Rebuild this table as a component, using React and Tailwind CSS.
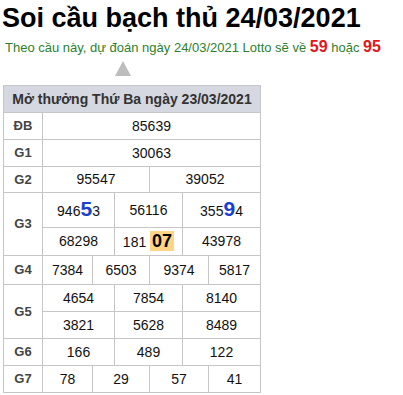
import React from "react";

const font = { fontFamily: '"Liberation Sans", Arial, sans-serif' };

function Cell({ className = "", children }) {
  return (
    <div className={`bg-white flex items-center justify-center text-[14px] text-[#111] ${className}`}>
      {children}
    </div>
  );
}

function Label({ className = "", children }) {
  return (
    <div className={`bg-white flex items-center justify-center text-[13px] font-bold text-[#444] ${className}`}>
      {children}
    </div>
  );
}

const Big = ({ children }) => (
  <span className="text-[21px] font-bold text-[#1a3fd0] leading-none">{children}</span>
);

export default function App() {
  return (
    <div className="w-[403px] h-[395px] bg-white overflow-hidden" style={font}>
      <h1 className="pt-[3px] pl-[2px] text-[27px] leading-[31px] font-bold text-black">
        Soi cầu bạch thủ 24/03/2021
      </h1>
      <div className="mt-[5px] pl-[5px] text-[13px] leading-[18px] text-[#2d7f2d]">
        Theo cầu này, dự đoán ngày 24/03/2021 Lotto sẽ về{" "}
        <span className="text-[16px] leading-none font-bold text-[#e3161c]">59</span> hoặc{" "}
        <span className="text-[16px] leading-none font-bold text-[#e3161c]">95</span>
      </div>
      <div className="mt-[4px] ml-[115px] w-0 h-0 border-l-[8px] border-r-[8px] border-b-[15px] border-l-transparent border-r-transparent border-b-[#bdbdbd]" />
      <div className="mt-[9px] ml-[3px] w-[258px] grid grid-cols-[38px_49px_21px_34px_32px_25px_51px] gap-px p-px bg-[#c6c6c6]">
        <div className="col-span-7 h-[26px] bg-[#d5d8e0] flex items-center justify-center text-[14px] font-bold text-[#333]">
          Mở thưởng Thứ Ba ngày 23/03/2021
        </div>

        <Label className="h-[26px]">ĐB</Label>
        <Cell className="col-span-6">85639</Cell>

        <Label className="h-[26px]">G1</Label>
        <Cell className="col-span-6">30063</Cell>

        <Label className="h-[25px]">G2</Label>
        <Cell className="col-span-3">95547</Cell>
        <Cell className="col-span-3">39052</Cell>

        <Label className="row-span-2">G3</Label>
        <Cell className="col-span-2 h-[34px]">
          <span>946<Big>5</Big>3</span>
        </Cell>
        <Cell className="col-span-2">56116</Cell>
        <Cell className="col-span-2">
          <span>355<Big>9</Big>4</span>
        </Cell>
        <Cell className="col-span-2 h-[27px]">68298</Cell>
        <Cell className="col-span-2">
          <span>
            181{" "}
            <span className="inline-block px-[2px] bg-[#fdd584] text-[18px] leading-[20px] font-bold text-black">07</span>
          </span>
        </Cell>
        <Cell className="col-span-2">43978</Cell>

        <Label className="h-[28px]">G4</Label>
        <Cell>7384</Cell>
        <Cell className="col-span-2">6503</Cell>
        <Cell className="col-span-2">9374</Cell>
        <Cell>5817</Cell>

        <Label className="row-span-2">G5</Label>
        <Cell className="col-span-2 h-[26px]">4654</Cell>
        <Cell className="col-span-2">7854</Cell>
        <Cell className="col-span-2">8140</Cell>
        <Cell className="col-span-2 h-[26px]">3821</Cell>
        <Cell className="col-span-2">5628</Cell>
        <Cell className="col-span-2">8489</Cell>

        <Label className="h-[26px]">G6</Label>
        <Cell className="col-span-2">166</Cell>
        <Cell className="col-span-2">489</Cell>
        <Cell className="col-span-2">122</Cell>

        <Label className="h-[26px]">G7</Label>
        <Cell>78</Cell>
        <Cell className="col-span-2">29</Cell>
        <Cell className="col-span-2">57</Cell>
        <Cell>41</Cell>
      </div>
    </div>
  );
}
